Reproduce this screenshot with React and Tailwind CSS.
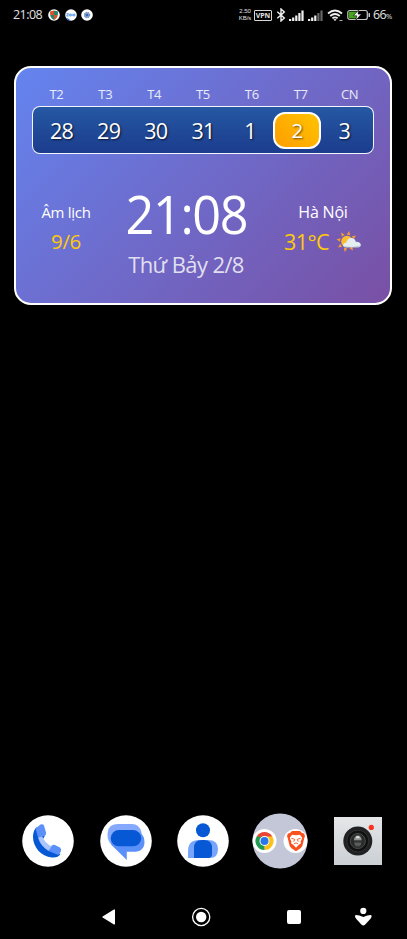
import React from 'react';

const days = ['T2', 'T3', 'T4', 'T5', 'T6', 'T7', 'CN'];
const dates = ['28', '29', '30', '31', '1', '2', '3'];

function Shield() {
  return (
    <svg width="12" height="12" viewBox="0 0 12 12">
      <circle cx="6" cy="6" r="5.8" fill="#fff" />
      <path d="M2 2.5L6 1.4V6H2.2Z" fill="#d5542c" />
      <path d="M6 1.4l4 1.1L9.8 6H6Z" fill="#2c8068" />
      <path d="M2.2 6H6v5C3.8 10 2.4 8 2.2 6Z" fill="#2c8068" />
      <path d="M6 6h3.8C9.6 8 8.2 10 6 11Z" fill="#d5542c" />
    </svg>
  );
}

function Chat() {
  return (
    <svg width="12" height="12" viewBox="0 0 12 12">
      <circle cx="6" cy="6" r="5.8" fill="#fff" />
      <path d="M.8 8.5A5.8 5.8 0 0 0 6 11.7L3.5 9.8Z" fill="#2478e8" />
      <path d="M1.5 4.7h2L1.6 7h2M7 4.7v2.5" stroke="#2478e8" fill="none" strokeWidth=".8" />
      <circle cx="5.2" cy="6" r="1" stroke="#2478e8" fill="none" strokeWidth=".8" />
      <circle cx="9.1" cy="6" r="1" stroke="#2478e8" fill="none" strokeWidth=".8" />
    </svg>
  );
}

function Gear() {
  return (
    <svg width="12" height="12" viewBox="0 0 12 12">
      <circle cx="6" cy="6" r="5.8" fill="#fff" />
      <circle cx="6" cy="6" r="2.6" fill="#8aa4ca" stroke="#6788bd" strokeWidth="1.2" strokeDasharray="1.3 .8" />
      <circle cx="6" cy="6" r="1.3" fill="#3669b1" />
    </svg>
  );
}

function Signal({ weak }) {
  return (
    <svg width="15" height="11" viewBox="0 0 15 11">
      {[2, 3.5, 5.5, 8, 10.5].map((h, i) => (
        <rect key={i} x={i * 3.1} y={11 - h} width="2.2" height={h} fill={weak && i > 2 ? '#666' : '#f0f0f0'} />
      ))}
    </svg>
  );
}

function StatusBar() {
  return (
    <div className="flex h-[30px] items-center pl-[13px] text-[#e2e2e2]">
      <span className="w-[35px] whitespace-nowrap text-[12.5px] leading-none tracking-[-0.55px]">21:08</span>
      <div className="flex w-[188px] gap-[4.5px]">
        <Shield />
        <Chat />
        <Gear />
      </div>
      <div className="w-[18px] text-center font-['Liberation_Sans'] text-[6px] leading-none">
        <div className="h-[7px] leading-[7px]">2.50</div>
        <div className="h-[7px] leading-[7px]">KB/s</div>
      </div>
      <div className="flex h-[11px] w-[18px] items-center justify-center rounded-[1px] border border-[#d8d8d8] text-[7px] font-bold leading-none">
        VPN
      </div>
      <svg className="ml-1" width="10" height="14" viewBox="0 0 10 14">
        <path d="M1.3 3.8L8.3 10 5 13V1l3.3 3-7 6.2" fill="none" stroke="#f0f0f0" strokeWidth="1.4" />
      </svg>
      <div className="ml-[3px] flex gap-1">
        <Signal />
        <Signal weak />
      </div>
      <svg className="ml-1" width="17" height="13" viewBox="0 0 17 13">
        <g fill="none" stroke="#f0f0f0" strokeWidth="1.8">
          <path d="M1 4.5Q8-1.5 15 4.5" />
          <path d="M3.2 7Q8 3 12.8 7" />
          <path d="M5.4 9.3Q8 7.4 10.6 9.3" />
        </g>
        <path d="M6.4 10.4Q8 9.4 9.6 10.4L8 12Z" fill="#eee" />
        <path d="M12.5 11.5h3" stroke="#aaa" />
      </svg>
      <svg className="ml-[3px]" width="24" height="12" viewBox="0 0 24 12">
        <rect x=".8" y="1.5" width="19.5" height="9" rx="2" fill="none" stroke="#c6c6c6" strokeWidth="1.2" />
        <rect x="2" y="2.6" width="8" height="6.8" fill="#46a51d" />
        <rect x="21.5" y="4" width="1.5" height="4" rx=".5" fill="#ccc" />
        <path d="M11.7 1L6.3 6.8h3.5L8.8 11.3l5.6-6.2H11Z" fill="#fff" stroke="#000" strokeWidth=".6" />
      </svg>
      <span className="ml-[2px] whitespace-nowrap text-[12.5px] leading-none tracking-[-0.6px]">
        66<span className="text-[7.5px] font-normal">%</span>
      </span>
    </div>
  );
}

function Weather() {
  return (
    <svg width="26" height="24" viewBox="0 0 26 24">
      <g fill="#f49b32">
        {[0, 45, 90, 135, 180, 225, 270, 315].map((a) => (
          <path key={a} d="M9.2 4.6L11 .7l1.8 3.9Z" transform={`rotate(${a + 12} 11 11.5)`} />
        ))}
      </g>
      <circle cx="11" cy="11.5" r="5.8" fill="#fbbd2e" />
      <path d="M10 17.3c-4 0-3.8-4.4.2-4.5.4-3.2 3-5.4 5.9-4.8 2.2.4 3.3 2 3.6 3.8 6-.3 6.8 5.5 2 5.5Z" fill="#e4edf1" />
      <path d="M8 16c4 1.4 11 .7 16-.5-.4 1.2-1.4 1.8-2.7 1.8H10c-.9 0-1.6-.4-2-1.3Z" fill="#b6c9d3" />
    </svg>
  );
}

function Widget() {
  return (
    <div className="ml-[14px] mt-9 h-[239px] w-[378px] rounded-[17px] border-2 border-white bg-[linear-gradient(135deg,#6484ef_0%,#7950a4_100%)] px-4 pt-[15px] text-white">
      <div className="grid h-[23px] w-[342px] grid-cols-7 items-center text-center text-[13px] font-normal leading-none tracking-[-0.3px] text-white/85">
        {days.map((d) => <span key={d}>{d}</span>)}
      </div>
      <div className="grid h-12 w-[342px] grid-cols-7 items-center justify-items-center rounded-[8px] border border-white/95 bg-gradient-to-b from-[#2558a3] to-[#1c3c8d] px-[5px]">
        {dates.map((d) =>
          d === '2' ? (
            <div key={d} className="flex h-[37px] w-12 items-center justify-center rounded-[12px] border-2 border-white bg-[linear-gradient(45deg,#ff9d00,#ffc400)] pt-px text-[20.5px] leading-none [text-shadow:1px_1px_2px_#0009]">
              {d}
            </div>
          ) : (
            <span key={d} className="pt-[2px] text-[21.5px] leading-none tracking-[-0.7px] [text-shadow:1px_1px_2px_#000b]">{d}</span>
          )
        )}
      </div>
      <div className="mt-[33px] flex whitespace-nowrap text-center">
        <div className="w-[68px] pt-[13px]">
          <div className="h-[25px] text-[15px] font-normal leading-[25px] tracking-[-0.3px]">Âm lịch</div>
          <div className="mt-px h-[30px] text-[20.5px] leading-[30px] tracking-[-0.3px] text-[#ffca08]">9/6</div>
        </div>
        <div className="flex w-[172px] flex-col items-center">
          <div className="h-[54px] scale-x-[0.96] pl-px text-[52.5px] font-normal leading-[54px] tracking-[-1.4px]">21:08</div>
          <div className="mt-[8px] h-[30px] text-[22px] leading-[30px] tracking-[-0.6px] text-[#e0dff0]">Thứ Bảy 2/8</div>
        </div>
        <div className="w-[102px] pt-[13px]">
          <div className="h-[25px] text-[16px] leading-[25px] tracking-[-0.2px]">Hà Nội</div>
          <div className="mt-[2px] flex h-[30px] items-center justify-center gap-[7px] text-[21.5px] leading-[30px] tracking-[-0.6px] text-[#ffca08]">
            <span>31°C</span>
            <Weather />
          </div>
        </div>
      </div>
    </div>
  );
}

function Phone() {
  return (
    <svg width="52" height="52" viewBox="0 0 52 52">
      <circle cx="26" cy="26" r="25.8" fill="#fff" />
      <path d="M16.5 22L23 20.5 20.5 25Q22 31 27.5 34.5L38.5 39Q36 43 30 42.5C19 41.5 11 32 11 22Q11 15 15 12Z" fill="#0758d4" />
      <path d="M16 22.5l4-1.5Q22.5 28 30 31.5L26.5 36Q18.5 31 16 22.5Z" fill="#a9c6ff" />
      <path d="M13.5 13.5L18.5 9.5Q21 8.5 22 10.5L24 17.5Q24.5 20 22 21L16 22.5Z" fill="#5b90fa" />
      <path d="M26.5 36L30 30.5Q31 29.5 33 30L38 32.5Q40 34 38.8 36.5L36.5 40Z" fill="#5b90fa" />
    </svg>
  );
}

function Messages() {
  return (
    <svg width="52" height="52" viewBox="0 0 52 52">
      <circle cx="26" cy="26" r="25.8" fill="#fff" />
      <path d="M18 9h14q7 0 9.5 8V30H12Q7.5 26 7.5 20 7.5 9 18 9Z" fill="#84a9ff" />
      <path d="M40 17.5Q44.5 21 44.5 27C44.5 33 41 36.7 35 36.7H26.8V45L11.5 30Q9.5 25 14 20Z" fill="#5b90fa" />
      <rect x="10.7" y="15" width="30.5" height="16.3" rx="8.15" fill="#0758d4" />
    </svg>
  );
}

function Contacts() {
  return (
    <svg width="52" height="52" viewBox="0 0 52 52">
      <circle cx="26" cy="26" r="25.8" fill="#fff" />
      <circle cx="26" cy="15.3" r="7" fill="#0758d4" />
      <path d="M11 43v-7q0-11 11-11h9q10 0 10 9 0 9-8 9Z" fill="#78a5fc" />
      <path d="M17 43V33q0-8 8-8h2q8 0 8 8v6q0 4-4 4Z" fill="#0758d4" />
    </svg>
  );
}

function Folder() {
  return (
    <svg width="56" height="56" viewBox="0 0 56 56">
      <circle cx="28" cy="28" r="27.5" fill="#c4c7d7" />
      <circle cx="12.5" cy="28" r="12" fill="#fff" />
      <circle cx="43.5" cy="28" r="12" fill="#fff" />
      <path d="M12.5 28L4.7 23.5A9 9 0 0 1 20.3 23.5Z" fill="#e94536" />
      <path d="M12.5 28L20.3 23.5A9 9 0 0 1 12.5 37Z" fill="#fbc116" />
      <path d="M12.5 28v9A9 9 0 0 1 4.7 23.5Z" fill="#229a50" />
      <path d="M12.5 23.5h7.8L12.5 37l3.9-6.7Z" fill="#fbc116" />
      <path d="M8.6 30.3L4.7 23.5l5.5.5Z" fill="#229a50" />
      <circle cx="12.5" cy="28" r="5" fill="#fff" />
      <circle cx="12.5" cy="28" r="4" fill="#2876e8" />
      <path d="M40 18H48L50 20 52 20.5 53 23 52.3 25 50.3 33 48.5 35.3 44 38.3 39.5 35.3 37.7 33 35.7 25 35 23 36 20.5 38 20Z" fill="#fa501e" />
      <path d="M40 21.8L44 22.3 48 21.8 50.3 25 48.6 28.5 49 30.3 46.3 32.2 44 34.7 41.700 32.2 39 30.3 39.4 28.5 37.7 25Z" fill="#fff" />
      <path d="M39.300 25.300l3.400 1-1 2.500M48.700 25.300l-3.400 1 1 2.500M41.800 31l2.200-1.200 2.200 1.200" fill="none" stroke="#fa501e" strokeWidth=".9" />
    </svg>
  );
}

function Camera() {
  return (
    <svg width="48" height="48" viewBox="0 0 48 48">
      <defs>
        <linearGradient id="cam" x2="0" y2="1">
          <stop stopColor="#e4e6e8" />
          <stop offset="1" stopColor="#cbd0d4" />
        </linearGradient>
        <linearGradient id="lens" x2="0" y2="1">
          <stop stopColor="#444" />
          <stop offset=".35" stopColor="#aaa" />
          <stop offset=".5" stopColor="#292929" />
          <stop offset=".75" stopColor="#666" />
          <stop offset="1" stopColor="#333" />
        </linearGradient>
      </defs>
      <path d="M0 0h48v48H0z" fill="url(#cam)" />
      <circle cx="23.8" cy="24" r="14.5" fill="#202122" />
      <circle cx="23.8" cy="24" r="11" fill="#111" stroke="#303132" />
      <circle cx="23.8" cy="24" r="7.5" fill="#292a2b" stroke="#4b4b4b" />
      <ellipse cx="23.8" cy="24" rx="3.8" ry="6.3" fill="url(#lens)" />
      <ellipse cx="23.8" cy="20.2" rx="2" ry="1.1" fill="#ddd" />
      <circle cx="37.3" cy="10.4" r="2.6" fill="#fb321e" />
    </svg>
  );
}

function Dock() {
  return (
    <div className="flex h-14 items-center pl-[22px]">
      <div className="w-[77.5px]"><Phone /></div>
      <div className="w-[77.5px]"><Messages /></div>
      <div className="w-[75px]"><Contacts /></div>
      <div className="w-[82px]"><Folder /></div>
      <Camera />
    </div>
  );
}

function NavBar() {
  return (
    <div className="mt-[36px] flex h-6 items-center pl-[101px]">
      <svg width="16" height="18" viewBox="0 0 16 18">
        <path d="M13.3 2v13.8L2 9Z" fill="#fff" stroke="#fff" strokeWidth="1.4" strokeLinejoin="round" />
      </svg>
      <svg className="ml-[74px]" width="20" height="20" viewBox="0 0 20 20">
        <circle cx="10.2" cy="10" r="8.6" fill="none" stroke="#fff" strokeWidth="1.3" />
        <circle cx="10.2" cy="10" r="5.2" fill="#fff" />
      </svg>
      <div className="ml-[76px] h-[14px] w-[14px] rounded-[2px] bg-white" />
      <svg className="ml-[53px]" width="20" height="20" viewBox="0 0 20 20">
        <circle cx="9.3" cy="3.9" r="3.1" fill="#fff" />
        <path d="M2 8Q5 8 9.3 10q4.3-2 7.3-2 1.8.2.8 2.2-1 2.3-3.2 4l-3.2 3.6q-1.7 1.5-3.4 0L4.4 14.2q-2-1.7-3.2-4-1-2 .8-2.2Z" fill="#fff" />
      </svg>
    </div>
  );
}

export default function App() {
  return (
    <div className="flex h-[939px] w-[407px] flex-col overflow-hidden bg-black font-['Open_Sans','Noto_Sans',sans-serif]">
      <StatusBar />
      <Widget />
      <div className="mt-[508px]">
        <Dock />
        <NavBar />
      </div>
    </div>
  );
}
